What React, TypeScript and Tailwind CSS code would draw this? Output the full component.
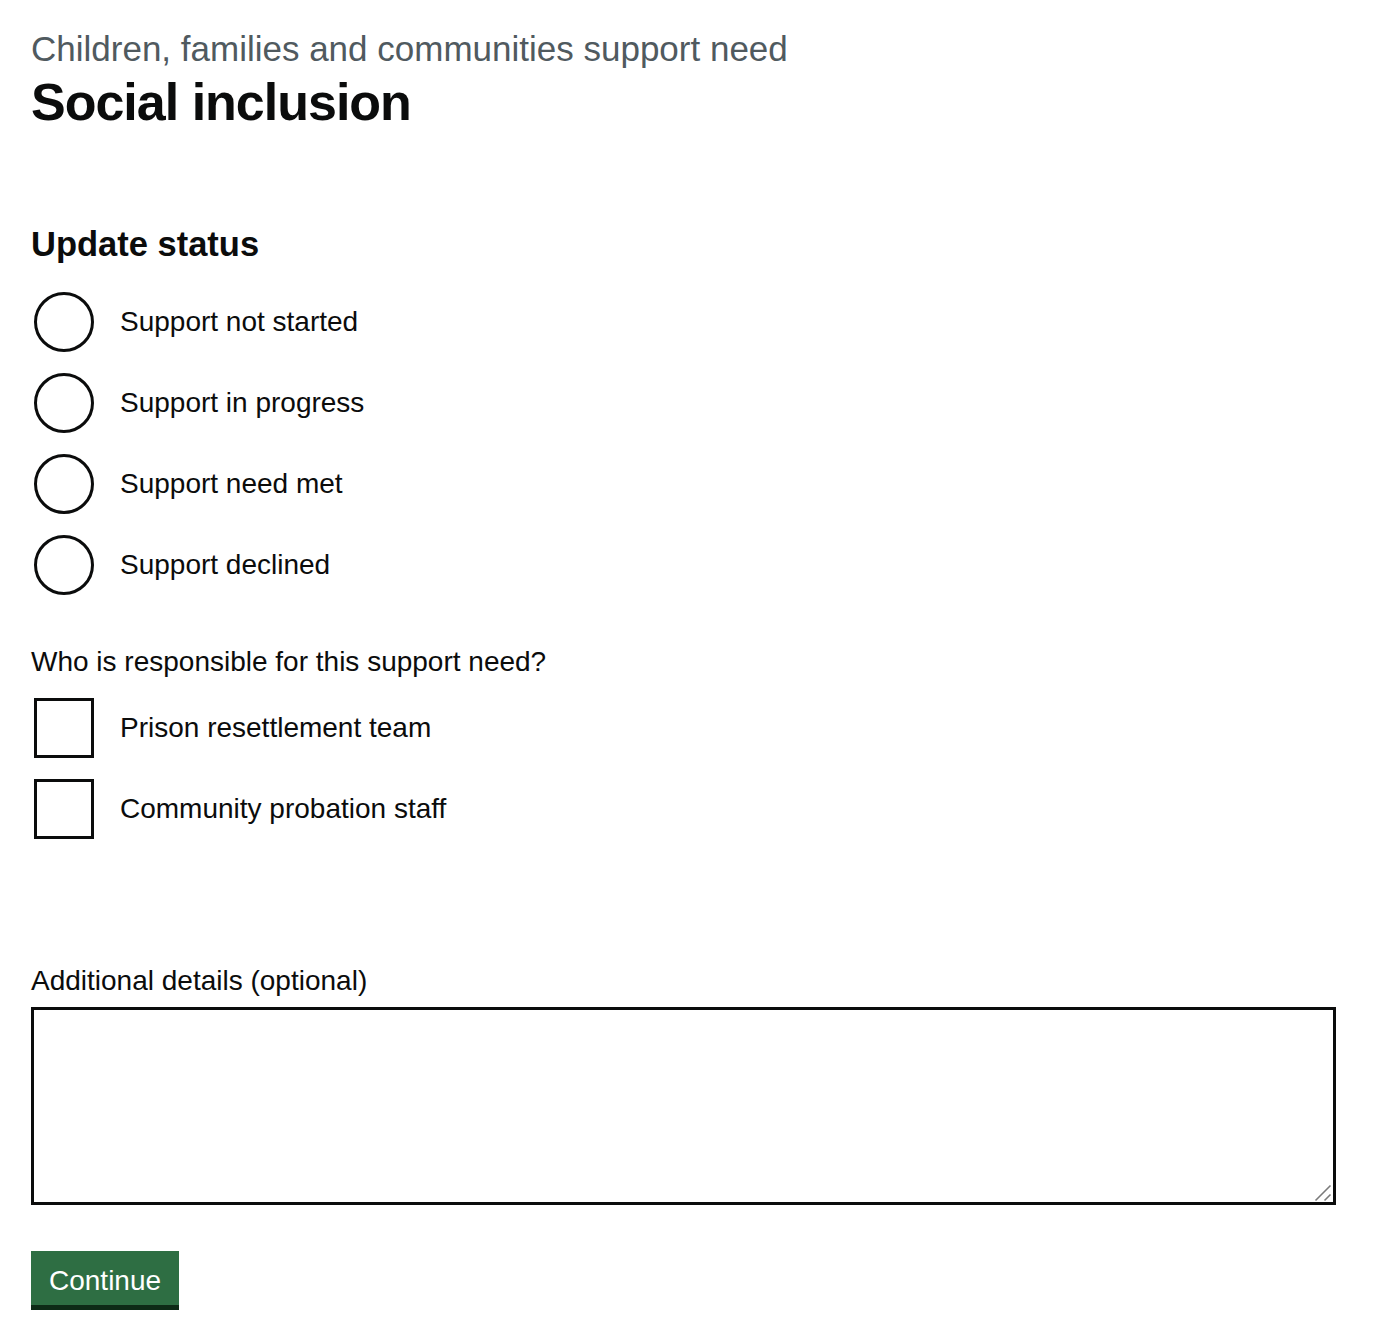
import React from "react";

const radios = ["Support not started", "Support in progress", "Support need met", "Support declined"];
const checks = ["Prison resettlement team", "Community probation staff"];

export default function App() {
  return (
    <div className="min-h-[1340px] bg-white pl-[31px] pr-[52px] pt-[29px] text-[#0b0c0c]" style={{ fontFamily: '"Liberation Sans", Arial, sans-serif' }}>
      <div className="text-[35px] leading-[40px] text-[#505a5f]">Children, families and communities support need</div>
      <h1 className="mt-[3px] text-[52px] font-bold leading-[60px] tracking-[-1px]">Social inclusion</h1>

      <h2 className="mt-[92px] text-[34.5px] font-bold leading-[40px]">Update status</h2>
      <div className="mt-[28px] flex flex-col gap-[21px]">
        {radios.map((r) => (
          <label key={r} className="flex items-center">
            <span className="ml-[3px] block h-[60px] w-[60px] rounded-full border-[3px] border-[#0b0c0c] bg-white" />
            <span className="ml-[26px] text-[28px] leading-[36px]">{r}</span>
          </label>
        ))}
      </div>

      <div className="mt-[49px] text-[28px] leading-[36px]">Who is responsible for this support need?</div>
      <div className="mt-[18px] flex flex-col gap-[21px]">
        {checks.map((c) => (
          <label key={c} className="flex items-center">
            <span className="ml-[3px] block h-[60px] w-[60px] border-[3px] border-[#0b0c0c] bg-white" />
            <span className="ml-[26px] text-[28px] leading-[36px]">{c}</span>
          </label>
        ))}
      </div>

      <div className="mt-[124px] text-[28px] leading-[36px]">Additional details (optional)</div>
      <div className="relative mt-[8px] w-[1305px]">
        <textarea className="block h-[198px] w-[1305px] resize-none border-[3px] border-[#0b0c0c] bg-white p-[8px] text-[28px] outline-none" />
        <svg className="absolute bottom-[3px] right-[3px]" width="20" height="20" viewBox="0 0 20 20">
          <line x1="2.5" y1="18.5" x2="17.5" y2="3.5" stroke="#7a7a7a" strokeWidth="1.6" />
          <line x1="11.5" y1="18.5" x2="17.5" y2="12.5" stroke="#7a7a7a" strokeWidth="1.6" />
        </svg>
      </div>

      <button className="mt-[46px] block h-[54px] overflow-visible bg-[#2e6e43] px-[18px] text-[28px] leading-[60px] text-white shadow-[0_5px_0_#0d2a16]">
        Continue
      </button>
    </div>
  );
}
